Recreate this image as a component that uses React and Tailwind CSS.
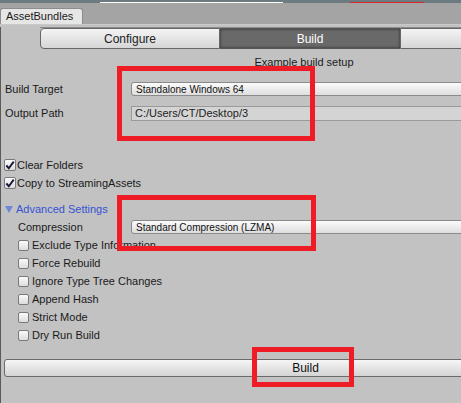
const CheckBox = ({ checked, big }) => (
  <span
    className={
      (big ? 'w-[12px] h-[12px]' : 'w-[11px] h-[11px]') +
      ' shrink-0 rounded-[2px] border border-[#7a7a7a] bg-gradient-to-b from-[#fbfbfb] to-[#dcdcdc] flex items-center justify-center'
    }
  >
    {checked && (
      <svg width="11" height="11" viewBox="0 0 11 11">
        <path d="M1.5 5.5 L4.2 8.6 L9.6 1.2" fill="none" stroke="#14183a" strokeWidth="2.1" />
      </svg>
    )}
  </span>
)

const Popup = ({ children }) => (
  <div className="ml-[130px] flex-1 h-[14px] rounded-[3px] border border-[#8a8a8a] bg-gradient-to-b from-[#fbfbfb] to-[#dedede] flex items-center pl-[4px] text-[10px] text-[#111]">
    {children}
  </div>
)

const options = [
  'Exclude Type Information',
  'Force Rebuild',
  'Ignore Type Tree Changes',
  'Append Hash',
  'Strict Mode',
  'Dry Run Build',
]

export default function App() {
  return (
    <div
      className="relative w-[461px] h-[403px] overflow-hidden bg-[#c2c2c2] text-[11px] text-[#1a1a1a]"
      style={{ fontFamily: '"Liberation Sans", Arial, sans-serif' }}
    >
      {/* Top strip */}
      <div className="h-[3px] bg-[#6b7b7f] flex items-end">
        <div className="ml-[100px] w-[183px] h-[1px] bg-white" />
        <div className="ml-[67px] w-[74px] h-[1px] bg-[#d8262b]" />
      </div>

      {/* Tab row */}
      <div className="h-[22px] bg-[#a4a4a4] flex items-end border-b border-[#c9c9c9]">
        <div className="w-[83px] h-[16px] rounded-t-[3px] border border-b-0 border-[#8c8c8c] bg-[#e6e6e6] flex items-center pl-[5px] text-[11px] leading-none">
          AssetBundles
        </div>
      </div>

      {/* Window body */}
      <div className="w-[607px] border-l border-[#5a5a5a] min-h-[378px]">
        {/* Toolbar */}
        <div className="mt-[2px] ml-[39px] flex h-[22px] border-t border-[#8c8c8c] pt-0">
          <div className="w-[180px] h-[21px] rounded-l-[4px] border border-[#666] bg-gradient-to-b from-[#f4f4f4] to-[#d6d6d6] flex items-center justify-center text-[12px] text-[#222]">
            Configure
          </div>
          <div className="w-[180px] h-[21px] border-y border-[#555] bg-[#696969] shadow-[inset_0_0_3px_rgba(0,0,0,0.6)] flex items-center justify-center text-[12px] text-white">
            Build
          </div>
          <div className="w-[180px] h-[21px] rounded-r-[4px] border border-[#666] bg-gradient-to-b from-[#f4f4f4] to-[#d6d6d6]" />
        </div>

        <div className="mt-[6px] h-[14px] flex items-center justify-center">Example build setup</div>

        <div className="mt-[13px] h-[14px] flex items-center">
          <span className="absolute left-[5px]">Build Target</span>
          <Popup>Standalone Windows 64</Popup>
        </div>

        <div className="mt-[10px] h-[15px] flex items-center">
          <span className="absolute left-[5px]">Output Path</span>
          <div className="ml-[130px] flex-1 h-[15px] border border-[#9a9a9a] bg-[#d4d4d4] flex items-center pl-[3px] text-[11px] text-[#222]">
            C:/Users/CT/Desktop/3
          </div>
        </div>

        <div className="mt-[35px] ml-[3px] flex flex-col">
          <label className="h-[18px] flex items-center gap-[1px]">
            <CheckBox checked big />
            Clear Folders
          </label>
          <label className="h-[18px] flex items-center gap-[1px]">
            <CheckBox checked big />
            Copy to StreamingAssets
          </label>
          <div className="mt-[8px] h-[18px] flex items-center gap-[3px] text-[#3652d6]">
            <svg width="8" height="7" viewBox="0 0 8 7" className="ml-[1px]">
              <path d="M0 0 H8 L4 7 Z" fill="#6f88d4" />
            </svg>
            Advanced Settings
          </div>
        </div>

        <div className="h-[18px] flex items-center">
          <span className="absolute left-[18px]">Compression</span>
          <Popup>Standard Compression (LZMA)</Popup>
        </div>

        <div className="ml-[17px] flex flex-col">
          {options.map((o) => (
            <label key={o} className="h-[18px] flex items-center gap-[3px]">
              <CheckBox />
              {o}
            </label>
          ))}
        </div>

        <div className="mt-[15px] ml-[3px] h-[18px] rounded-[3px] border border-[#6a6a6a] bg-gradient-to-b from-[#f6f6f6] to-[#d4d4d4] flex items-center justify-center text-[12px] text-[#111]">
          Build
        </div>
      </div>

      {/* Red annotation boxes */}
      <div className="absolute left-[117px] top-[66px] w-[198px] h-[75px] border-[5px] border-[#ee1c25]" />
      <div className="absolute left-[117px] top-[195px] w-[199px] h-[56px] border-[5px] border-[#ee1c25]" />
      <div className="absolute left-[252px] top-[347px] w-[102px] h-[40px] border-[5px] border-[#ee1c25]" />
    </div>
  )
}
